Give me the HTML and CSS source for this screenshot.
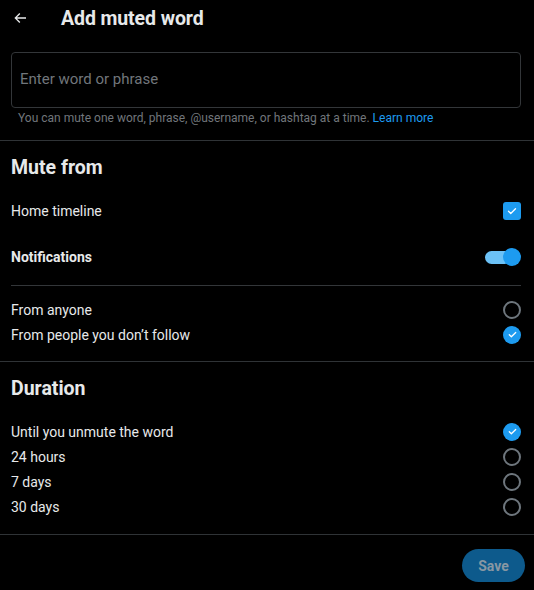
FILE: index.html
```html
<!DOCTYPE html>
<html lang="en">
<head>
  <meta charset="UTF-8" />
  <meta name="viewport" content="width=device-width, initial-scale=1.0" />
  <title>Add muted word</title>
  <link rel="stylesheet" href="styles.css">
</head>
<body>

  <!-- Header -->
  <header class="top-bar">
    <button class="back-btn" aria-label="Back">
      <svg viewBox="0 0 24 24" width="16" height="16"><path d="M7.414 13l5.043 5.04-1.414 1.42L3.586 12l7.457-7.46 1.414 1.42L7.414 11H21v2H7.414z" fill="currentColor"/></svg>
    </button>
    <h1 class="title">Add muted word</h1>
  </header>

  <div class="field-wrap">
    <input class="word-input" type="text" placeholder="Enter word or phrase">
    <p class="hint">You can mute one word, phrase, @username, or hashtag at a time. <a href="#">Learn more</a></p>
  </div>

  <section class="group">
    <h2 class="group-title">Mute from</h2>
    <div class="row row-home">
      <span>Home timeline</span>
      <span class="check-box">
        <svg viewBox="0 0 24 24" width="12" height="12"><path d="M5 12.5l4.5 4.5L19 7.5" fill="none" stroke="#fff" stroke-width="2.6" stroke-linecap="round" stroke-linejoin="round"/></svg>
      </span>
    </div>
    <div class="row row-notif">
      <span class="strong">Notifications</span>
      <span class="toggle"><span class="knob"></span></span>
    </div>
    <div class="inner-rule"></div>
    <div class="row">
      <span>From anyone</span>
      <span class="radio"></span>
    </div>
    <div class="row">
      <span>From people you don’t follow</span>
      <span class="radio on">
        <svg viewBox="0 0 24 24" width="11" height="11"><path d="M5 12.5l4.5 4.5L19 7.5" fill="none" stroke="#fff" stroke-width="2.8" stroke-linecap="round" stroke-linejoin="round"/></svg>
      </span>
    </div>
  </section>

  <section class="group group-last">
    <h2 class="group-title">Duration</h2>
    <div class="row row-first">
      <span>Until you unmute the word</span>
      <span class="radio on">
        <svg viewBox="0 0 24 24" width="11" height="11"><path d="M5 12.5l4.5 4.5L19 7.5" fill="none" stroke="#fff" stroke-width="2.8" stroke-linecap="round" stroke-linejoin="round"/></svg>
      </span>
    </div>
    <div class="row">
      <span>24 hours</span>
      <span class="radio"></span>
    </div>
    <div class="row">
      <span>7 days</span>
      <span class="radio"></span>
    </div>
    <div class="row">
      <span>30 days</span>
      <span class="radio"></span>
    </div>
  </section>

  <footer class="bottom-bar">
    <button class="save-btn">Save</button>
  </footer>

</body>
</html>
```

FILE: styles.css
```css
* { box-sizing: border-box; margin: 0; padding: 0; }

html, body {
  background: #000;
  color: #e7e9ea;
  font-family: Roboto, "Liberation Sans", sans-serif;
  font-size: 14px;
}

.top-bar {
  height: 36px;
  display: flex;
  align-items: center;
  padding-left: 12px;
}

.back-btn {
  width: 16px; height: 16px;
  background: none; border: none;
  color: #e7e9ea;
  display: flex;
}

.title {
  margin-left: 33px;
  font-size: 19.5px;
  font-weight: 700;
  letter-spacing: -0.1px;
}

.field-wrap {
  padding: 16px 13px 0 11px;
  border-bottom: 1px solid #2f3336;
}

.word-input {
  width: 100%;
  height: 56px;
  background: #000;
  border: 1px solid #333639;
  border-radius: 4px;
  padding: 0 8px 3px;
  color: #e7e9ea;
  font-family: inherit;
  font-size: 15px;
  outline: none;
}

.word-input::placeholder { color: #71767b; }

.hint {
  padding: 2px 0 14px 7px;
  font-size: 12px;
  line-height: 16px;
  color: #71767b;
}

.hint a { color: #1d9bf0; text-decoration: none; }

.group {
  padding: 0 13px 14px 11px;
  border-bottom: 1px solid #2f3336;
}

.group-last { padding-bottom: 15px; }

.group-title {
  font-size: 19.5px;
  font-weight: 700;
  height: 50px;
  padding-top: 2px;
  display: flex;
  align-items: center;
}

.row {
  display: flex;
  justify-content: space-between;
  align-items: center;
  height: 25px;
}

.row-home { height: 40px; }
.row-notif { height: 52px; }
.row-first { margin-top: 7px; }

.strong { font-weight: 700; }

.inner-rule {
  height: 1px;
  background: #333639;
  margin: 2px 0 11px;
}

.check-box {
  width: 18px; height: 18px;
  border-radius: 3px;
  background: #1d9bf0;
  display: flex; align-items: center; justify-content: center;
}

.toggle {
  width: 36px; height: 18px;
  display: flex; align-items: center;
  position: relative;
}

.toggle::before {
  content: "";
  width: 26px; height: 13px;
  border-radius: 7px;
  background: #6cc2f7;
}

.knob {
  position: absolute;
  right: 0; top: 0;
  width: 18px; height: 18px;
  border-radius: 50%;
  background: #1d9bf0;
}

.radio {
  width: 18px; height: 18px;
  border-radius: 50%;
  border: 2px solid #6e767d;
  display: flex; align-items: center; justify-content: center;
}

.radio.on {
  border: none;
  background: #1d9bf0;
}

.bottom-bar {
  display: flex;
  justify-content: flex-end;
  padding: 14px 9px;
}

.save-btn {
  width: 63px; height: 33px;
  border: none;
  border-radius: 17px;
  background: #0d5a8c;
  color: #8797a3;
  font-family: inherit;
  font-size: 14px;
  font-weight: 700;
}
```
